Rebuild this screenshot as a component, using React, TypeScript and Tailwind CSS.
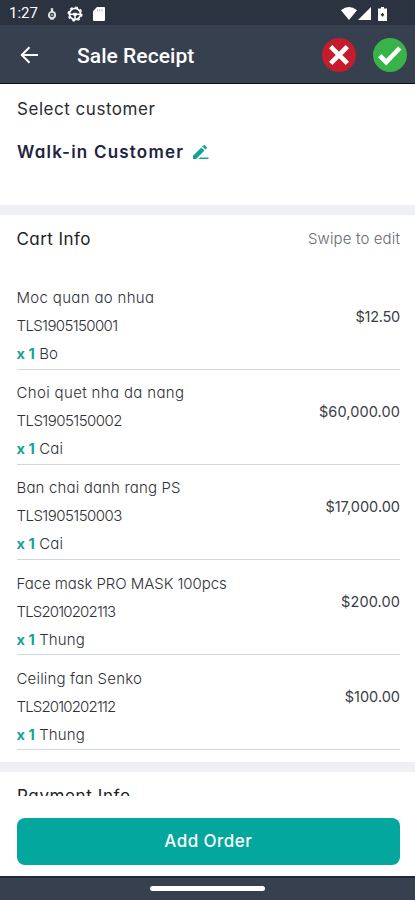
import React from "react";

type Item = {
  name: string;
  nameCls: string;
  code: string;
  codeCls: string;
  unit: string;
  price: string;
  priceCls: string;
};

const items: Item[] = [
  { name: "Moc quan ao nhua", nameCls: "tracking-[0.33px]", code: "TLS1905150001", codeCls: "tracking-[-0.62px]", unit: "Bo", price: "$12.50", priceCls: "tracking-[-0.25px]" },
  { name: "Choi quet nha da nang", nameCls: "tracking-[0.35px]", code: "TLS1905150002", codeCls: "tracking-[-0.54px]", unit: "Cai", price: "$60,000.00", priceCls: "tracking-[0.1px]" },
  { name: "Ban chai danh rang PS", nameCls: "tracking-[0.16px]", code: "TLS1905150003", codeCls: "tracking-[-0.54px]", unit: "Cai", price: "$17,000.00", priceCls: "tracking-[0px]" },
  { name: "Face mask PRO MASK 100pcs", nameCls: "tracking-[-0.06px]", code: "TLS2010202113", codeCls: "tracking-[-0.84px]", unit: "Thung", price: "$200.00", priceCls: "tracking-[0.1px]" },
  { name: "Ceiling fan Senko", nameCls: "tracking-[0.17px]", code: "TLS2010202112", codeCls: "tracking-[-0.84px]", unit: "Thung", price: "$100.00", priceCls: "tracking-[0px]" },
];

function StatusBar() {
  return (
    <div className="flex h-[25px] shrink-0 items-center bg-[#2b3240] pl-[9px] pr-[28px] pt-[2px] text-white">
      <span className="w-[38px] whitespace-nowrap font-['Roboto',sans-serif] text-[15px] leading-none">1:27</span>
      <svg className="h-[14px] w-[10px]" viewBox="0 0 10 14" fill="none" stroke="#dfe3e8">
        <path d="M5 1.2v4.5" strokeWidth="2.4" />
        <circle cx="5" cy="8" r="3.1" strokeWidth="1.9" />
        <path d="M3.2 11.8h3.6" strokeWidth="1.8" />
        <path d="M3.8 8h2.4" strokeWidth="1.2" />
      </svg>
      <svg className="ml-[10px] h-4 w-4" viewBox="0 0 16 16" fill="none" stroke="white">
        <circle cx="8" cy="8" r="5.6" strokeWidth="1.8" />
        <circle cx="8" cy="8" r="6.9" strokeWidth="1.3" strokeDasharray="2.7 2.72" />
        <path d="M2.5 8.2h11M8 8v5" strokeWidth="1.5" />
        <path d="M6.2 6.8h3.6v3H6.2z" fill="white" stroke="none" />
      </svg>
      <svg className="ml-[10px] h-[14px] w-3" viewBox="0 0 12 14">
        <path d="M4 0h7q1 0 1 1v12q0 1-1 1H1q-1 0-1-1V4.2z" fill="white" />
        <path d="M4.6 2.2v2.2M6.8 2.2v2.2M9 2.2v2.2" stroke="#aab" strokeWidth="0.9" />
      </svg>
      <svg className="ml-auto h-[13px] w-4" viewBox="0 0 16 13">
        <path d="M8 13 0 3.2Q8-3 16 3.2z" fill="white" />
      </svg>
      <svg className="ml-[1px] h-[13px] w-[13px]" viewBox="0 0 13 13">
        <path d="M13 0v13H0z" fill="white" />
      </svg>
      <svg className="ml-[7px] h-[14px] w-[9px]" viewBox="0 0 9 14">
        <path d="M3 0h3v1.5h3V14H0V1.5h3z" fill="white" />
        <path d="M4.5 6v3.4M2.9 7.7h3.2" stroke="#2b3240" strokeWidth="1.4" />
      </svg>
    </div>
  );
}

function Header() {
  return (
    <div className="flex h-[59px] shrink-0 items-center border-b border-[#0d121c] bg-[#37404f] pl-[20px] pr-[8px] pt-[2px]">
      <svg className="h-[18px] w-[19px]" viewBox="0 0 19 18" fill="none" stroke="white" strokeWidth="2">
        <path d="M18 9H2.5M9.5 1.2 1.8 9l7.7 7.8" />
      </svg>
      <h1 className="ml-[38px] mt-[3px] whitespace-nowrap font-['Roboto',sans-serif] text-[21px] font-medium leading-none tracking-[0.05px] text-white">
        Sale Receipt
      </h1>
      <svg className="ml-auto h-[34px] w-[34px]" viewBox="0 0 34 34">
        <circle cx="17" cy="17" r="17" fill="#c41c2c" />
        <path d="m9.6 9.6 14.8 14.8M24.4 9.6 9.6 24.4" stroke="white" strokeWidth="5.2" strokeLinecap="square" transform="translate(1.7 1.7) scale(.9)" />
      </svg>
      <svg className="ml-[17px] h-[34px] w-[34px]" viewBox="0 0 34 34">
        <circle cx="17" cy="17" r="17" fill="#37b34a" />
        <path d="m6.8 17.6 6.4 6.6L26.8 10" fill="none" stroke="white" strokeWidth="4.6" />
      </svg>
    </div>
  );
}

function CartRow({ item }: { item: Item }) {
  return (
    <li className="flex h-[95.2px] items-center justify-between border-b border-[#d6d7d9]">
      <div className="mt-[9px] text-[15px] font-light leading-[28px] text-[#2e3038]">
        <p className={item.nameCls}>{item.name}</p>
        <p className={item.codeCls}>{item.code}</p>
        <p className="tracking-[0.1px]">
          <span className="text-[14.5px] font-bold text-[#12a594]">x 1</span> {item.unit}
        </p>
      </div>
      <span className={`mb-[10px] text-[14.5px] leading-5 text-[#3a3d46] ${item.priceCls}`}>{item.price}</span>
    </li>
  );
}

export default function App() {
  return (
    <div className="flex h-[900px] w-[415px] flex-col overflow-hidden bg-white font-['Inter','Liberation_Sans',sans-serif] [font-feature-settings:'cv11']">
      <StatusBar />
      <Header />
      <main className="flex h-[712px] shrink-0 flex-col overflow-hidden">
        <section className="h-[121px] shrink-0 px-[17px] pt-[13px]">
          <h2 className="text-[17px] leading-6 tracking-[0.53px] text-[#2a2b31]">Select customer</h2>
          <div className="mt-[19px] flex items-center">
            <span className="whitespace-nowrap text-[17px] font-semibold leading-6 tracking-[1.2px] text-[#222440]">Walk-in Customer</span>
            <svg className="ml-[9px] mt-[1px] h-[15px] w-4" viewBox="0 0 16 15" fill="#12a594">
              <path d="M0 14v-3.2L8.4 2.4l3.1 3.1L3.1 14zM9.3 1.5 10.8.3q.5-.4 1 0l2 2q.4.5 0 1l-1.4 1.3zM7 12.5h8.5V14H5.5z" />
            </svg>
          </div>
        </section>
        <div className="h-[10px] shrink-0 bg-[#eff0f3]" />
        <section className="shrink-0 pl-[16.5px] pr-[15px] pt-[12px]">
          <div className="flex items-center justify-between">
            <h2 className="text-[17px] leading-6 tracking-[0.45px] text-[#202127]">Cart Info</h2>
            <span className="text-[15px] font-light leading-6 tracking-[0.13px] text-[#666970]">Swipe to edit</span>
          </div>
          <ul className="mt-[23.5px]">
            {items.map((item) => (
              <CartRow key={item.code} item={item} />
            ))}
          </ul>
        </section>
        <div className="mt-[11.5px] h-[10px] shrink-0 bg-[#eff0f3]" />
        <h2 className="mt-[12px] shrink-0 px-[17px] text-[17px] leading-6 tracking-[0.6px] text-[#202127]">Payment Info</h2>
      </main>
      <div className="flex h-[80px] shrink-0 items-center justify-center bg-white pl-[16.5px] pr-[15px] pt-[10px]">
        <button className="h-[47px] w-full rounded-[8px] bg-[#03a79d] pt-[2px] text-[17px] font-medium tracking-[0.45px] text-white">Add Order</button>
      </div>
      <div className="flex h-[24px] shrink-0 items-center justify-center border-t-2 border-[#1c2a3c] bg-[#37404f]">
        <div className="mb-[2px] h-[5px] w-[115px] rounded-full bg-white" />
      </div>
    </div>
  );
}
